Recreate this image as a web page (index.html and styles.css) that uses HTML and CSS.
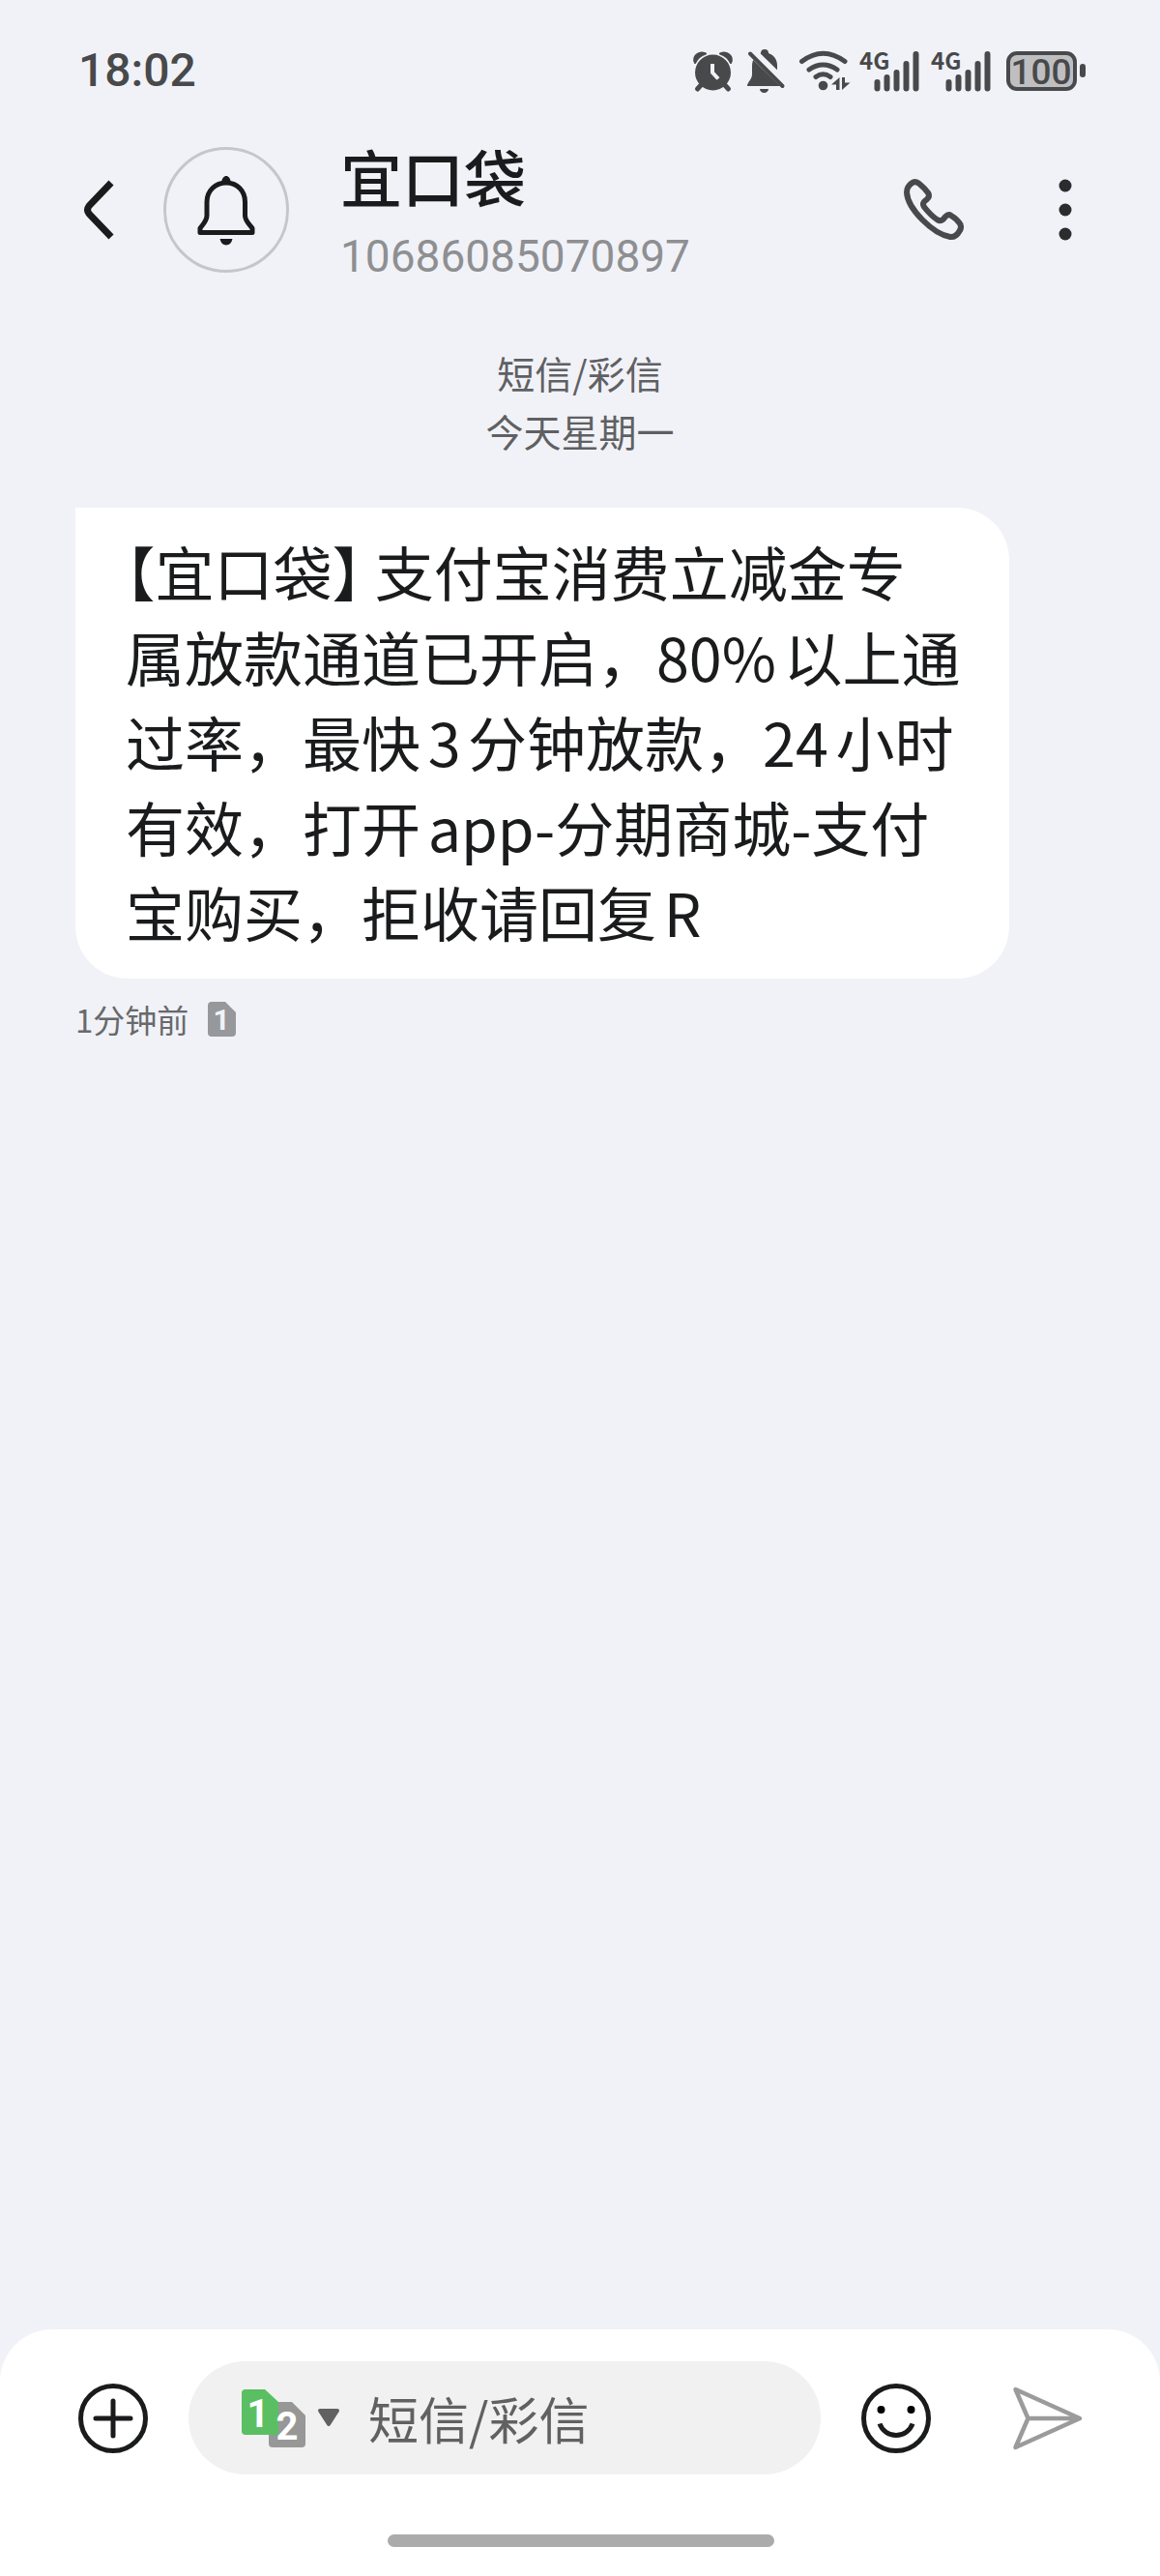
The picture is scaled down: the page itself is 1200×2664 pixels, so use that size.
FILE: index.html
```html
<!DOCTYPE html>
<html lang="zh-CN">
<head>
    <meta charset="UTF-8">
    <meta name="viewport" content="width=device-width, initial-scale=1.0">
    <title>宜口袋</title>
    <link rel="stylesheet" href="styles.css">
</head>
<body>
    <div class="status-bar">
        <time class="clock">18:02</time>
        <div class="status-icons">
            <!-- alarm -->
            <svg width="46" height="44" viewBox="0 0 46 44">
                <path d="M2 14C-1 8 5 1 13 4.500C7 6.500 4 9.500 2 14ZM39 14C42 8 36 1 28 4.500C34 6.500 37 9.500 39 14Z" stroke="#48494b" stroke-width="2" stroke-linejoin="round"/>
                <path d="M9 36L4.500 41M32 36l4.500 5" stroke="#48494b" stroke-width="5" stroke-linecap="round"/>
                <circle cx="20.500" cy="24" r="18.500"/>
                <path d="M20 15v9l6 6.500" class="cut" stroke-width="4"/>
            </svg>
            <!-- muted -->
            <svg width="42" height="44" viewBox="0 0 42 44">
                <path d="M14 4a4 4 0 0 1 8 0C28 6 31 11 31 17v9c0 5 5 8 5 12H0c0-4 5-7 5-12v-9C5 11 8 6 14 4ZM13 41h9a4.500 4 0 0 1-9 0Z"/>
                <path d="M0-2L40 37" class="cut" stroke-width="10"/>
                <path d="M3 4.500L36.500 38" stroke="#48494b" stroke-width="4" stroke-linecap="round"/>
            </svg>
            <!-- wifi -->
            <svg width="54" height="44" viewBox="0 0 54 44">
                <path d="M4.500 12.500Q26.500-4 49 12.500M12 21Q26.500 11 41 21M19 28.500Q26.500 23 34 28.500" fill="none" stroke="#48494b" stroke-width="5" stroke-linecap="round"/>
                <circle cx="26.500" cy="37.500" r="4.800"/>
                <path d="M43.500 29v13h-3.500v-5.500h-5ZM46 29h3v5.500h5.500L46 42Z"/>
            </svg>
            <svg width="64" height="44" viewBox="0 0 64 44">
                <text x="0" y="21" class="net">4G</text>
                <path d="M18.500 34v6.500M28.500 29v11.500M38.500 24v16.500M48.500 15v25.500M58.500 5v35.500" class="bars"/>
            </svg>
            <svg width="64" height="44" viewBox="0 0 64 44">
                <text x="0" y="21" class="net">4G</text>
                <path d="M18.500 34v6.500M28.500 29v11.500M38.500 24v16.500M48.500 15v25.500M58.500 5v35.500" class="bars"/>
            </svg>
            <svg width="87" height="44" viewBox="0 0 87 44">
                <rect x="6" y="4" width="69" height="37" rx="9" fill="#bfbfc1" stroke="#48494b" stroke-width="4"/>
                <rect x="80" y="15" width="6" height="14" rx="3"/>
                <text x="40" y="36" class="level">100</text>
            </svg>
        </div>
    </div>

    <header class="header">
        <button class="icon-btn" aria-label="返回">
            <svg width="36" height="60" viewBox="0 0 36 60">
                <path d="M31 2L8 26Q5 30 8 34L31 58" fill="none" stroke="#1a1b1c" stroke-width="7"/>
            </svg>
        </button>
        <div class="avatar">
            <svg width="60" height="73" viewBox="0 0 60 73">
                <path d="M3 59.500H57V55C53 50 49.500 47 49.500 42V28C49.500 16 41 8 30 8S10 16 10 28V42C10 47 7 50 3 55Z" fill="none" stroke="#1a1b1c" stroke-width="5" stroke-linejoin="round"/>
                <path d="M25 8C26-1.500 34-1.500 35 8ZM23.500 66h13q-1.500 6.500-6.500 6.500T23.500 66Z" fill="#1a1b1c"/>
            </svg>
        </div>
        <div class="contact">
            <h1>宜口袋</h1>
            <p>10686085070897</p>
        </div>
        <button class="icon-btn" aria-label="拨打电话">
            <svg width="62" height="64" viewBox="0 0 62 64">
                <path d="M8 4.500Q12 1.500 16 5Q22 10 25.500 15Q27 18 24 21L21 23.500Q19 26 21 29Q28 38 35 42.500Q38 44 40.500 42L43 39Q46 36 49 38Q55 41.500 58.500 47Q60 51 57.500 54Q54 60.500 48 60C30 57 4 31 3 14Q3 8 8 4.500Z" fill="none" stroke="#48494b" stroke-width="6"/>
            </svg>
        </button>
        <button class="icon-btn more" aria-label="更多">
            <svg width="28" height="64" viewBox="0 0 28 64">
                <circle cx="14" cy="7" r="6.500"/>
                <circle cx="14" cy="32" r="6.500"/>
                <circle cx="14" cy="57" r="6.500"/>
            </svg>
        </button>
    </header>

    <main class="thread">
        <div class="day">
            <p>短信/彩信</p>
            <p>今天星期一</p>
        </div>
        <p class="bubble"><span class="half">【</span>宜口袋<span class="half">】</span> 支付宝消费立减金专<br>属放款通道已开启，80%以上通<br>过率，最快3分钟放款，24小时<br>有效，打开app-分期商城-支付<br>宝购买，拒收请回复R</p>
        <div class="meta">
            <span>1分钟前</span>
            <svg width="29" height="36" viewBox="0 0 29 36">
                <path d="M4 0H18L29 11V32Q29 36 25 36H4Q0 36 0 32V4Q0 0 4 0Z" fill="#97989b"/>
                <text x="14" y="29" class="sim-mini">1</text>
            </svg>
        </div>
    </main>

    <footer class="composer">
        <form class="composer-row">
            <button type="button" class="icon-btn" aria-label="添加">
                <svg width="72" height="72" viewBox="0 0 72 72">
                    <circle cx="36" cy="36" r="33.500" class="line"/>
                    <path d="M36 18V54M18 36H54" class="line" stroke-linecap="round"/>
                </svg>
            </button>
            <div class="field">
                <button type="button" class="icon-btn" aria-label="选择SIM卡">
                    <svg width="102" height="60" viewBox="0 0 102 60">
                        <path d="M32 13H52L66 27V56Q66 60 62 60H32Q28 60 28 56V17Q28 13 32 13Z" fill="#979797"/>
                        <path d="M4 0H24L38 13V47H4Q0 47 0 43V4Q0 0 4 0Z" fill="#5abf62"/>
                        <text x="17" y="39" class="sim">1</text>
                        <text x="47" y="52" class="sim">2</text>
                        <path d="M81 22H99L90 36Z" fill="#616161" stroke="#616161" stroke-width="4" stroke-linejoin="round"/>
                    </svg>
                </button>
                <input type="text" placeholder="短信/彩信" aria-label="短信/彩信">
            </div>
            <button type="button" class="icon-btn" aria-label="表情">
                <svg width="72" height="72" viewBox="0 0 72 72">
                    <circle cx="36" cy="36" r="33.500" class="line"/>
                    <circle cx="20.500" cy="27" r="4"/>
                    <circle cx="51.500" cy="27" r="4"/>
                    <path d="M19 41.500A18 18 0 0 0 53 41.500" class="line"/>
                </svg>
            </button>
            <button type="submit" class="icon-btn send" aria-label="发送">
                <svg width="72" height="72" viewBox="0 0 72 72">
                    <path d="M2.500 6L69 36L2.500 66L15.500 36ZM15.500 36H69" fill="none" stroke="#9b9b9b" stroke-width="4.500" stroke-linejoin="round"/>
                </svg>
            </button>
        </form>
        <div class="home-bar"></div>
    </footer>
</body>
</html>
```
FILE: styles.css
```css
* {
    box-sizing: border-box;
}

body {
    margin: 0;
    min-height: 100vh;
    display: flex;
    flex-direction: column;
    background-color: #f1f2f7;
    color: #1a1b1c;
    font-family: "Noto Sans CJK SC", sans-serif;
}

h1, p {
    margin: 0;
}

svg {
    display: block;
    overflow: visible;
}

.icon-btn {
    flex: none;
    padding: 0;
    border: none;
    background: none;
    cursor: pointer;
}

/* status bar */
.status-bar {
    display: flex;
    align-items: center;
    justify-content: space-between;
    height: 145px;
    padding: 0 76px 0 81px;
    color: #48494b;
}

.clock {
    font-family: Roboto, sans-serif;
    font-size: 48px;
    font-weight: 500;
    line-height: 56px;
}

.status-icons {
    display: flex;
    gap: 10px;
    fill: #48494b;
}

.cut {
    fill: none;
    stroke: #f1f2f7;
}

.bars {
    fill: none;
    stroke: #48494b;
    stroke-width: 6;
    stroke-linecap: round;
}

.net {
    font: 700 24px "Noto Sans CJK SC", sans-serif;
}

.level {
    font: 500 37px Roboto, sans-serif;
    text-anchor: middle;
}

/* header */
.header {
    display: flex;
    align-items: center;
    padding: 0 84px;
}

.avatar {
    display: flex;
    flex: none;
    align-items: center;
    justify-content: center;
    width: 130px;
    height: 130px;
    margin: 0 53px 0 49px;
    border: 3px solid #c5c6ca;
    border-radius: 50%;
}

.contact {
    flex: 1;
}

.contact h1 {
    margin-bottom: 24px;
    font-size: 64px;
    font-weight: 500;
    line-height: 72px;
}

.contact p {
    color: #8e8f92;
    font-family: Roboto, sans-serif;
    font-size: 46px;
    line-height: 48px;
}

.more {
    margin-left: 91px;
    fill: #2b2c2e;
}

/* messages */
.thread {
    flex: 1;
    padding: 66px 78px 48px;
}

.day {
    margin-bottom: 50px;
    color: #5f6063;
    font-size: 39px;
    line-height: 60px;
    text-align: center;
}

.bubble {
    width: fit-content;
    min-width: 966px;
    padding: 22px 48px 25px 52px;
    border-radius: 0 54px 54px 54px;
    background-color: #fff;
    font-size: 61px;
    line-height: 88px;
    white-space: nowrap;
    text-autospace: normal;
}

.half {
    font-feature-settings: "halt";
}

.meta {
    display: flex;
    align-items: center;
    gap: 20px;
    margin-top: 20px;
    color: #68696c;
    font-size: 33px;
    line-height: 44px;
}

.sim-mini {
    fill: #f1f2f7;
    font: 700 30px Roboto, sans-serif;
    text-anchor: middle;
}

/* composer */
.composer {
    padding: 33px 80px 30px 81px;
    border-radius: 54px 54px 0 0;
    background-color: #fff;
}

.composer-row {
    display: flex;
    align-items: center;
    gap: 42px;
}

.field {
    display: flex;
    flex: 1;
    align-items: center;
    gap: 29px;
    min-width: 0;
    height: 117px;
    padding: 0 55px;
    border-radius: 59px;
    background-color: #f1f1f1;
}

.field input {
    flex: 1;
    min-width: 0;
    padding: 0;
    border: none;
    outline: none;
    background: none;
    color: #1a1b1c;
    font-family: inherit;
    font-size: 52px;
}

.field input::placeholder {
    color: #616161;
}

.line {
    fill: none;
    stroke: #1a1b1c;
    stroke-width: 5;
}

.sim {
    fill: #fff;
    font: 700 40px Roboto, sans-serif;
    text-anchor: middle;
}

.send {
    margin-left: 43px;
}

.home-bar {
    width: 400px;
    height: 13px;
    margin: 62px auto 0;
    border-radius: 7px;
    background-color: #ababab;
}
```
